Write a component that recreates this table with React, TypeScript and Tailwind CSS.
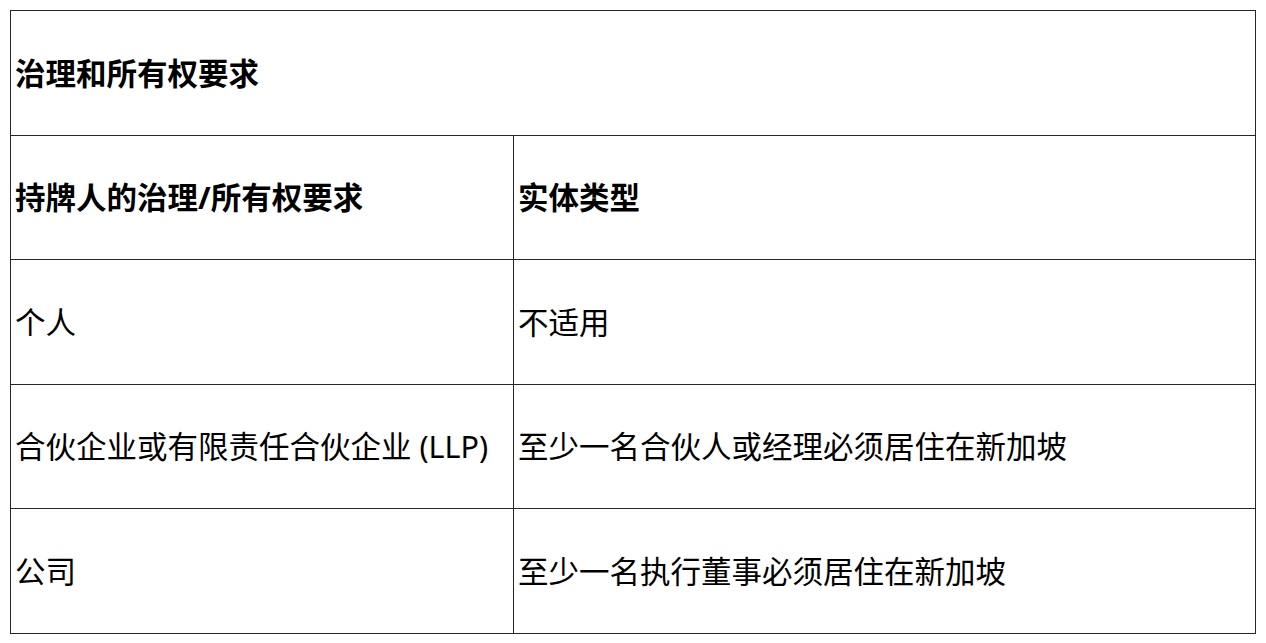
const rows = [
  { left: '个人', right: '不适用' },
  { left: '合伙企业或有限责任合伙企业 (LLP)', right: '至少一名合伙人或经理必须居住在新加坡' },
  { left: '公司', right: '至少一名执行董事必须居住在新加坡' },
];

export default function App() {
  return (
    <div
      className="bg-white p-[10px] text-black"
      style={{ fontFamily: '"Noto Sans", "Noto Sans CJK SC", sans-serif' }}
    >
      <table className="w-full table-fixed border-collapse text-[30.5px] leading-none">
        <colgroup>
          <col className="w-[503px]" />
          <col />
        </colgroup>
        <tbody>
          <tr>
            <td colSpan={2} className="h-[124.6px] border border-[#262626] px-[4px] align-middle font-bold">
              治理和所有权要求
            </td>
          </tr>
          <tr>
            <td className="h-[124.6px] border border-[#262626] px-[4px] align-middle font-bold">持牌人的治理/所有权要求</td>
            <td className="h-[124.6px] border border-[#262626] px-[4px] align-middle font-bold">实体类型</td>
          </tr>
          {rows.map(r => (
            <tr key={r.left}>
              <td className="h-[124.6px] border border-[#262626] px-[4px] align-middle">{r.left}</td>
              <td className="h-[124.6px] border border-[#262626] px-[4px] align-middle">{r.right}</td>
            </tr>
          ))}
        </tbody>
      </table>
    </div>
  );
}
